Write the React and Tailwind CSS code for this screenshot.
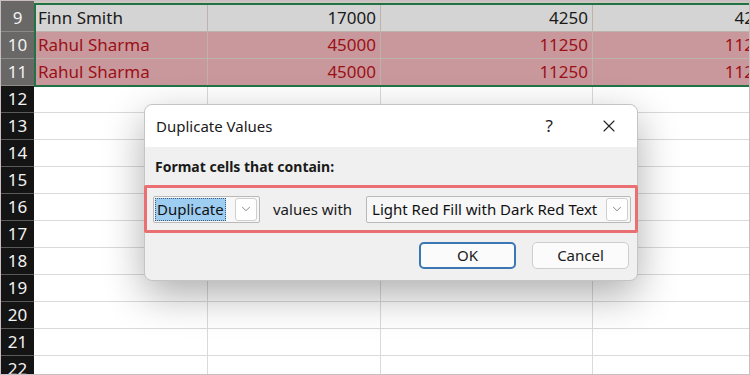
import React from 'react';
import { X, ChevronDown } from 'lucide-react';

const font = { fontFamily: '"Noto Sans", "Open Sans", sans-serif' };

const dataRows = [
  { n: 9, name: 'Finn Smith', a: '17000', b: '4250', c: '42', dup: false },
  { n: 10, name: 'Rahul Sharma', a: '45000', b: '11250', c: '112', dup: true },
  { n: 11, name: 'Rahul Sharma', a: '45000', b: '11250', c: '112', dup: true },
];

const emptyRows = [12, 13, 14, 15, 16, 17, 18, 19, 20, 21, 22];

const DataRow = ({ row }) => {
  const cell = row.dup ? 'bg-[#c9989c] text-[#9c1016]' : 'bg-[#d4d4d4] text-[#1a1a1a]';
  return (
    <div className="flex h-[27px]">
      <div className="w-[33px] shrink-0 flex items-center justify-center bg-[#6a6767] text-[#f2f2f2] text-[17px] border-b border-[#8d8a8a]">
        {row.n}
      </div>
      <div className={`w-[174px] shrink-0 flex items-center pl-[4px] text-[17px] border-r border-b border-[#bdb3ac] ${cell}`}>
        {row.name}
      </div>
      <div className={`w-[173px] shrink-0 flex items-center justify-end pr-[4px] text-[17px] border-r border-b border-[#bdb3ac] ${cell}`}>
        {row.a}
      </div>
      <div className={`w-[212px] shrink-0 flex items-center justify-end pr-[4px] text-[17px] border-r border-b border-[#bdb3ac] ${cell}`}>
        {row.b}
      </div>
      <div className={`flex-1 flex items-center justify-end text-[17px] border-b border-[#bdb3ac] overflow-hidden whitespace-nowrap ${cell}`}>
        <span className="-mr-[5px]">{row.c}</span>
      </div>
    </div>
  );
};

const EmptyRow = ({ n }) => (
  <div className="flex h-[27px]">
    <div className="w-[33px] shrink-0 flex items-center justify-center bg-[#141414] text-[#f2f2f2] text-[17px] border-b border-[#5a5a5a]">
      {n}
    </div>
    <div className="w-[174px] shrink-0 bg-white border-r border-b border-[#dadada]" />
    <div className="w-[173px] shrink-0 bg-white border-r border-b border-[#dadada]" />
    <div className="w-[212px] shrink-0 bg-white border-r border-b border-[#dadada]" />
    <div className="flex-1 bg-white border-b border-[#dadada]" />
  </div>
);

const Combo = ({ children, width, selected }) => (
  <div className={`${width} shrink-0 h-[27px] flex items-center border border-[#b9b9b9] bg-[#f7f7f7] rounded-[2px] pl-[1px] pr-[2px]`}>
    {selected ? (
      <span className="h-[23px] flex items-center px-[1px] bg-[#9dcdf1] border border-dotted border-[#3b5c7a] text-[15px] text-[#111]">
        {children}
      </span>
    ) : (
      <span className="flex-1 pl-[4px] text-[15px] text-[#111] whitespace-nowrap">{children}</span>
    )}
    <span className="ml-auto w-[22px] h-[23px] flex items-center justify-center bg-white border border-[#cfcfcf] rounded-[3px]">
      <ChevronDown size={14} strokeWidth={1.2} className="text-[#555]" />
    </span>
  </div>
);

export default function App() {
  return (
    <div className="relative w-[750px] h-[375px] overflow-hidden bg-white border border-[#c9bcc2]" style={font}>
      {/* previous row sliver */}
      <div className="flex h-[4px]">
        <div className="w-[33px] bg-[#6a6767]" />
        <div className="flex-1 bg-[#cfc5bf] border-b border-[#9bb5a0]" />
      </div>

      {dataRows.map((r) => (
        <DataRow key={r.n} row={r} />
      ))}
      {emptyRows.map((n) => (
        <EmptyRow key={n} n={n} />
      ))}

      {/* selection outline */}
      <div className="absolute left-[33px] top-[2px] w-[740px] h-[84px] border-2 border-[#217346] pointer-events-none" />

      {/* dialog */}
      <div className="absolute left-[143px] top-[103px] w-[494px] h-[177px] rounded-[8px] border border-[#c4c4c4] bg-[#f0f0f0] shadow-[0_14px_40px_rgba(0,0,0,0.32)] flex flex-col">
        <div className="h-[42px] bg-white rounded-t-[8px] flex items-center pl-[11px] pr-[18px]">
          <span className="text-[15px] text-[#1a1a1a]">Duplicate Values</span>
          <span className="ml-auto text-[17px] text-[#222] mr-[46px]">?</span>
          <X size={20} strokeWidth={1.3} className="text-[#222]" />
        </div>
        <div className="flex-1 flex flex-col">
          <div className="h-[38px] flex items-center pl-[10px] text-[14px] font-bold text-[#1a1a1a]">
            Format cells that contain:
          </div>
          <div className="h-[48px] -mx-[1px] border-[3px] border-[#ea6f72] rounded-[2px] flex items-center pl-[6px] pr-[6px]">
            <Combo width="w-[107px]" selected>Duplicate</Combo>
            <span className="ml-[13px] shrink-0 whitespace-nowrap text-[15px] text-[#1a1a1a]">values with</span>
            <div className="ml-[14px]">
              <Combo width="w-[265px]">Light Red Fill with Dark Red Text</Combo>
            </div>
          </div>
          <div className="flex-1 flex items-center justify-end gap-[16px] pr-[8px] pb-[2px]">
            <button className="w-[97px] h-[27px] rounded-[5px] border-2 border-[#3b77b4] bg-[#fbfbfb] text-[15px] text-[#1a1a1a]">
              OK
            </button>
            <button className="w-[97px] h-[27px] rounded-[5px] border border-[#cdcdcd] bg-[#fbfbfb] text-[15px] text-[#1a1a1a]">
              Cancel
            </button>
          </div>
        </div>
      </div>
    </div>
  );
}
